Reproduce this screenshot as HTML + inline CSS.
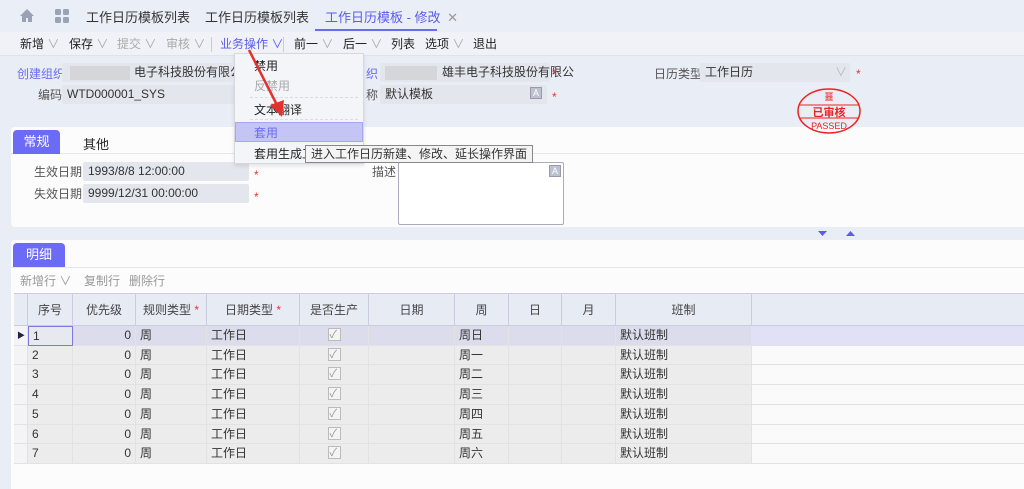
<!DOCTYPE html><html><head><meta charset="utf-8"><style>
*{margin:0;padding:0;box-sizing:border-box}
body{width:1024px;height:489px;overflow:hidden;background:#e9edf5;font-family:"Liberation Sans","Noto Sans CJK SC",sans-serif;font-size:12px;color:#333;position:relative}
.a{position:absolute;white-space:nowrap}
.f{background:#e3e6ec;border-radius:2px;height:19px;line-height:19px;padding-left:5px}
.r{color:#e33}
.lbl{color:#555;text-align:right}
.th{position:absolute;top:294px;height:32px;line-height:32px;text-align:center;border-right:1px solid #ccd;background:#e7ebf4;color:#444}
.cell{position:absolute;border-right:1px solid #e2e2e2;border-bottom:1px solid #e2e2e2;padding:0 4px;overflow:hidden}
.cb{display:inline-block;width:13px;height:13px;border:1px solid #bbb;background:#f4f4f4;vertical-align:middle;position:relative;top:-1px}
</style></head><body>
<div class="a" style="left:0;top:0;width:1024px;height:32px;background:#eaeef6"></div>
<svg class="a" style="left:20px;top:9px" width="14" height="13"><path d="M7 0L0 7h2v6h4V9h2v4h4V7h2z" fill="#9aa3b5"/></svg>
<svg class="a" style="left:55px;top:9px" width="14" height="14"><rect x="0" y="0" width="6" height="6" rx="1.5" fill="#9aa3b5"/><rect x="8" y="0" width="6" height="6" rx="1.5" fill="#9aa3b5"/><rect x="0" y="8" width="6" height="6" rx="1.5" fill="#9aa3b5"/><rect x="8" y="8" width="6" height="6" rx="1.5" fill="#9aa3b5"/></svg>
<div class="a" style="left:86px;top:7px;font-size:13px;color:#333">工作日历模板列表</div>
<div class="a" style="left:205px;top:7px;font-size:13px;color:#333">工作日历模板列表</div>
<div class="a" style="left:325px;top:7px;font-size:13px;color:#5b5bf0">工作日历模板 - 修改 <span style="color:#999;margin-left:3px">✕</span></div>
<div class="a" style="left:315px;top:29px;width:122px;height:2px;background:#6b6bf2"></div>
<div class="a" style="left:0;top:32px;width:1024px;height:24px;background:#f0f2f7;border-bottom:1px solid #e0e3ea"></div>
<div class="a" style="left:20px;top:35px;color:#222">新增 <span style="color:#aaa">∨</span></div>
<div class="a" style="left:69px;top:35px;color:#222">保存 <span style="color:#aaa">∨</span></div>
<div class="a" style="left:117px;top:35px;color:#aaa">提交 ∨</div>
<div class="a" style="left:166px;top:35px;color:#aaa">审核 ∨</div>
<div class="a" style="left:211px;top:37px;width:1px;height:15px;background:#ccc"></div>
<div class="a" style="left:220px;top:35px;color:#5b5bf0">业务操作 ∨</div>
<div class="a" style="left:283px;top:37px;width:1px;height:15px;background:#ccc"></div>
<div class="a" style="left:294px;top:35px;color:#222">前一 <span style="color:#aaa">∨</span></div>
<div class="a" style="left:343px;top:35px;color:#222">后一 <span style="color:#aaa">∨</span></div>
<div class="a" style="left:391px;top:35px;color:#222">列表</div>
<div class="a" style="left:425px;top:35px;color:#222">选项 <span style="color:#aaa">∨</span></div>
<div class="a" style="left:473px;top:35px;color:#222">退出</div>
<div class="a" style="left:17px;top:65px;color:#6b6bf0">创建组织</div>
<div class="a f" style="left:62px;top:63px;width:170px;padding-left:0"><span style="display:inline-block;width:60px;height:14px;background:#d5d6da;margin:0 4px 0 8px;vertical-align:middle"></span>电子科技股份有限公</div>
<div class="a lbl" style="left:38px;top:86px">编码</div>
<div class="a f" style="left:62px;top:85px;width:172px">WTD000001_SYS</div>
<div class="a" style="left:366px;top:65px;color:#6b6bf0">织</div>
<div class="a f" style="left:380px;top:63px;width:170px;padding-left:0"><span style="display:inline-block;width:52px;height:14px;background:#d5d6da;margin:0 5px 0 5px;vertical-align:middle"></span>雄丰电子科技股份有限公</div>
<div class="a r" style="left:552px;top:67px">*</div>
<div class="a lbl" style="left:366px;top:86px">称</div>
<div class="a f" style="left:380px;top:85px;width:167px">默认模板</div>
<div class="a" style="left:530px;top:87px;width:12px;height:12px;border:1px solid #99a;background:#bcc2d0;color:#fff;font-size:9px;line-height:10px;text-align:center">A</div>
<div class="a r" style="left:552px;top:90px">*</div>
<div class="a lbl" style="left:654px;top:65px">日历类型</div>
<div class="a f" style="left:700px;top:63px;width:150px">工作日历<span style="position:absolute;left:135px;color:#bbb">∨</span></div>
<div class="a r" style="left:856px;top:67px">*</div>
<div class="a" style="left:11px;top:127px;width:1013px;height:100px;background:#fcfcfd;border-radius:4px 0 0 4px"></div>
<div class="a" style="left:11px;top:153px;width:1013px;height:1px;background:#e4e6ea"></div>
<svg class="a" style="left:794px;top:86px" width="70" height="52"><ellipse cx="35" cy="25" rx="31" ry="22" fill="none" stroke="#e22" stroke-width="1.5"/><line x1="5" y1="19" x2="65" y2="19" stroke="#e22"/><line x1="5" y1="32" x2="65" y2="32" stroke="#e22"/><text x="35" y="14" font-size="9" fill="#e22" text-anchor="middle" font-family="Liberation Sans,Noto Sans CJK SC,sans-serif">噩</text><text x="35" y="30" font-size="11" font-weight="bold" fill="#e22" text-anchor="middle" font-family="Liberation Sans,Noto Sans CJK SC,sans-serif">已审核</text><text x="35" y="43" font-size="9" fill="#e22" text-anchor="middle" font-family="Liberation Sans,sans-serif">PASSED</text></svg>
<div class="a" style="left:13px;top:130px;width:47px;height:24px;background:#6b6bf5;border-radius:4px 4px 0 0;color:#fff;font-size:13px;text-align:center;line-height:24px">常规</div>
<div class="a" style="left:83px;top:134px;font-size:13px;color:#222">其他</div>
<div class="a lbl" style="left:34px;top:163px">生效日期</div>
<div class="a f" style="left:83px;top:162px;width:166px;color:#333">1993/8/8 12:00:00</div>
<div class="a r" style="left:254px;top:168px">*</div>
<div class="a lbl" style="left:34px;top:185px">失效日期</div>
<div class="a f" style="left:83px;top:184px;width:166px;color:#333">9999/12/31 00:00:00</div>
<div class="a r" style="left:254px;top:190px">*</div>
<div class="a lbl" style="left:372px;top:163px">描述</div>
<div class="a" style="left:398px;top:162px;width:166px;height:63px;border:1px solid #aab;background:#fff;border-radius:2px"></div>
<div class="a" style="left:549px;top:165px;width:12px;height:12px;border:1px solid #99a;background:#bcc2d0;color:#fff;font-size:9px;line-height:10px;text-align:center">A</div>
<svg class="a" style="left:818px;top:230px" width="40" height="8"><path d="M0 1h9l-4.5 5z" fill="#5b5bf0"/><path d="M28 6h9l-4.5-5z" fill="#5b5bf0"/></svg>
<div class="a" style="left:11px;top:240px;width:1013px;height:249px;background:#fcfcfd;border-radius:4px 0 0 0"></div>
<div class="a" style="left:13px;top:243px;width:52px;height:24px;background:#6b6bf5;border-radius:4px 4px 0 0;color:#fff;font-size:13px;text-align:center;line-height:24px">明细</div>
<div class="a" style="left:11px;top:267px;width:1013px;height:1px;background:#e4e6ea"></div>
<div class="a" style="left:20px;top:272px;color:#999">新增行 ∨</div>
<div class="a" style="left:84px;top:272px;color:#999">复制行</div>
<div class="a" style="left:129px;top:272px;color:#999">删除行</div>
<div class="a" style="left:14px;top:293px;width:1010px;height:1px;background:#ccd"></div>
<div class="th" style="left:14px;width:14px"></div>
<div class="th" style="left:28px;width:45px">序号</div>
<div class="th" style="left:73px;width:63px">优先级</div>
<div class="th" style="left:136px;width:71px">规则类型 <span class="r">*</span></div>
<div class="th" style="left:207px;width:93px">日期类型 <span class="r">*</span></div>
<div class="th" style="left:300px;width:69px">是否生产</div>
<div class="th" style="left:369px;width:86px">日期</div>
<div class="th" style="left:455px;width:54px">周</div>
<div class="th" style="left:509px;width:53px">日</div>
<div class="th" style="left:562px;width:54px">月</div>
<div class="th" style="left:616px;width:136px">班制</div>
<div class="th" style="left:752px;width:272px;border-right:none"></div>
<div class="a" style="left:14px;top:325px;width:1010px;height:1px;background:#ccd"></div>
<div id="rows"></div>
<script>
var w=['周日','周一','周二','周三','周四','周五','周六'],h='';
for(var i=0;i<7;i++){var t=326+Math.round(i*19.7),nt=326+Math.round((i+1)*19.7),hh=nt-t,bg=i==0?'#dcdcec':'#ececec',st='top:'+t+'px;height:'+hh+'px;line-height:'+(hh-1)+'px;';
h+='<div class="cell" style="left:14px;'+st+'width:14px;background:#f4f4f6;padding:0 3px;color:#224;font-size:8px">'+(i==0?'▶':'')+'</div>';
h+='<div class="cell" style="left:28px;'+st+'width:45px;background:'+(i==0?'#e8e8f0':bg)+';'+(i==0?'border:1px solid #7a7ad8;':'')+'">'+(i+1)+'</div>';
h+='<div class="cell" style="left:73px;'+st+'width:63px;background:'+bg+';text-align:right">0</div>';
h+='<div class="cell" style="left:136px;'+st+'width:71px;background:'+bg+'">周</div>';
h+='<div class="cell" style="left:207px;'+st+'width:93px;background:'+bg+'">工作日</div>';
h+='<div class="cell" style="left:300px;'+st+'width:69px;background:'+bg+';text-align:center"><span class="cb"><span style="position:absolute;left:1px;top:-3px;color:#999;font-size:11px">✓</span></span></div>';
h+='<div class="cell" style="left:369px;'+st+'width:86px;background:'+bg+'"></div>';
h+='<div class="cell" style="left:455px;'+st+'width:54px;background:'+bg+'">'+w[i]+'</div>';
h+='<div class="cell" style="left:509px;'+st+'width:53px;background:'+bg+'"></div>';
h+='<div class="cell" style="left:562px;'+st+'width:54px;background:'+bg+'"></div>';
h+='<div class="cell" style="left:616px;'+st+'width:136px;background:'+bg+'">默认班制</div>';
h+='<div class="cell" style="left:752px;'+st+'width:272px;background:'+(i==0?'#e0e0f6':'#fafafa')+';border-right:none"></div>';}
document.getElementById('rows').innerHTML=h;
</script>
<div class="a" style="left:234px;top:53px;width:130px;height:111px;background:#f4f5f8;border:1px solid #d6d8de;box-shadow:0 2px 4px rgba(0,0,0,.1)"></div>
<div class="a" style="left:254px;top:57px;color:#222">禁用</div>
<div class="a" style="left:254px;top:77px;color:#aaa">反禁用</div>
<div class="a" style="left:250px;top:97px;width:108px;border-top:1px dashed #ddd"></div>
<div class="a" style="left:254px;top:101px;color:#222">文本翻译</div>
<div class="a" style="left:250px;top:119px;width:108px;border-top:1px dashed #ddd"></div>
<div class="a" style="left:235px;top:122px;width:128px;height:20px;background:#c5c5f5;border:1px solid #a8a8ee"></div>
<div class="a" style="left:254px;top:124px;color:#6b6bf0">套用</div>
<div class="a" style="left:254px;top:145px;color:#222">套用生成工</div>
<div class="a" style="left:305px;top:145px;height:18px;line-height:16px;padding:0 5px;background:#f4f4f4;border:1px solid #888;color:#333">进入工作日历新建、修改、延长操作界面</div>
<svg class="a" style="left:240px;top:45px" width="60" height="75"><line x1="9" y1="5" x2="38" y2="62" stroke="#e53030" stroke-width="2.5"/><path d="M30 60L42 72L44 55z" fill="#e53030"/></svg>
</body></html>
